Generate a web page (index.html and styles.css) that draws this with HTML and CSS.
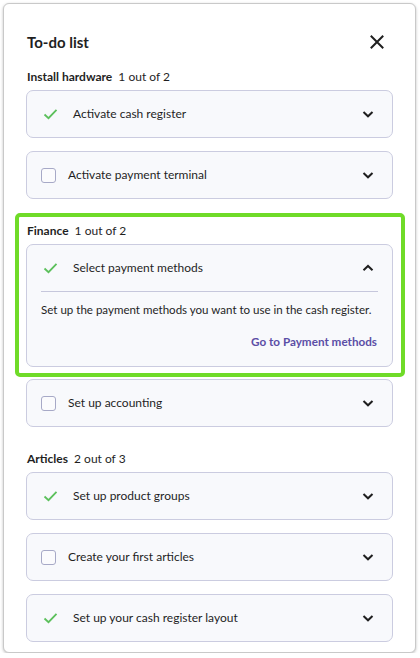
FILE: index.html
```html
<!DOCTYPE html>
<html lang="en">
<head>
<meta charset="utf-8">
<title>To-do list</title>
<link rel="stylesheet" href="styles.css">
</head>
<body>
<div class="panel">
  <div class="header">
    <h1 class="title">To-do list</h1>
    <button class="close" aria-label="Close">
      <svg width="24" height="24" viewBox="0 0 24 24"><path d="M6.5 6.5 L17.5 17.5 M17.5 6.5 L6.5 17.5" stroke="#1f1f1f" stroke-width="2" stroke-linecap="square" fill="none"/></svg>
    </button>
  </div>

  <section class="group">
    <div class="label"><b>Install hardware</b> 1 out of 2</div>
    <div class="card">
      <div class="row">
        <span class="check"><svg width="20" height="16" viewBox="0 0 20 16"><path d="M3.5 8.5 L7.5 12.2 L15.5 3.8" stroke="#5cc05c" stroke-width="1.8" fill="none"/></svg></span>
        <span class="text done">Activate cash register</span>
        <span class="chev"><svg width="16" height="16" viewBox="0 0 16 16"><path d="M3.5 6 L8 10.3 L12.5 6" stroke="#1f1f1f" stroke-width="2" fill="none"/></svg></span>
      </div>
    </div>
    <div class="card">
      <div class="row">
        <span class="box"></span>
        <span class="text">Activate payment terminal</span>
        <span class="chev"><svg width="16" height="16" viewBox="0 0 16 16"><path d="M3.5 6 L8 10.3 L12.5 6" stroke="#1f1f1f" stroke-width="2" fill="none"/></svg></span>
      </div>
    </div>
  </section>

  <section class="group highlight">
    <div class="label"><b>Finance</b> 1 out of 2</div>
    <div class="card open">
      <div class="row">
        <span class="check"><svg width="20" height="16" viewBox="0 0 20 16"><path d="M3.5 8.5 L7.5 12.2 L15.5 3.8" stroke="#5cc05c" stroke-width="1.8" fill="none"/></svg></span>
        <span class="text done">Select payment methods</span>
        <span class="chev"><svg width="16" height="16" viewBox="0 0 16 16"><path d="M3.5 10.3 L8 6 L12.5 10.3" stroke="#1f1f1f" stroke-width="2" fill="none"/></svg></span>
      </div>
      <div class="body">
        <p class="desc">Set up the payment methods you want to use in the cash register.</p>
        <div class="actions"><a class="link" href="#">Go to Payment methods</a></div>
      </div>
    </div>
  </section>
  <div class="card after-hl">
    <div class="row">
      <span class="box"></span>
      <span class="text">Set up accounting</span>
      <span class="chev"><svg width="16" height="16" viewBox="0 0 16 16"><path d="M3.5 6 L8 10.3 L12.5 6" stroke="#1f1f1f" stroke-width="2" fill="none"/></svg></span>
    </div>
  </div>

  <section class="group">
    <div class="label"><b>Articles</b> 2 out of 3</div>
    <div class="card">
      <div class="row">
        <span class="check"><svg width="20" height="16" viewBox="0 0 20 16"><path d="M3.5 8.5 L7.5 12.2 L15.5 3.8" stroke="#5cc05c" stroke-width="1.8" fill="none"/></svg></span>
        <span class="text done">Set up product groups</span>
        <span class="chev"><svg width="16" height="16" viewBox="0 0 16 16"><path d="M3.5 6 L8 10.3 L12.5 6" stroke="#1f1f1f" stroke-width="2" fill="none"/></svg></span>
      </div>
    </div>
    <div class="card">
      <div class="row">
        <span class="box"></span>
        <span class="text">Create your first articles</span>
        <span class="chev"><svg width="16" height="16" viewBox="0 0 16 16"><path d="M3.5 6 L8 10.3 L12.5 6" stroke="#1f1f1f" stroke-width="2" fill="none"/></svg></span>
      </div>
    </div>
    <div class="card">
      <div class="row">
        <span class="check"><svg width="20" height="16" viewBox="0 0 20 16"><path d="M3.5 8.5 L7.5 12.2 L15.5 3.8" stroke="#5cc05c" stroke-width="1.8" fill="none"/></svg></span>
        <span class="text done">Set up your cash register layout</span>
        <span class="chev"><svg width="16" height="16" viewBox="0 0 16 16"><path d="M3.5 6 L8 10.3 L12.5 6" stroke="#1f1f1f" stroke-width="2" fill="none"/></svg></span>
      </div>
    </div>
  </section>
</div>
</body>
</html>
```
FILE: styles.css
```css
* { box-sizing: border-box; }
html, body { margin: 0; padding: 0; background: #fff; }
body {
  font-family: Lato, "Liberation Sans", sans-serif;
  color: #1f1f1f;
  font-size: 12px;
}
.panel {
  margin: 3px 0 0 3px;
  width: 413px;
  border: 1px solid #c9c9c9;
  border-radius: 6px;
  box-shadow: 0 1px 3px rgba(0,0,0,0.25);
  padding: 26px 22px 10px 22px;
  background: #fff;
}
.header {
  display: flex;
  align-items: center;
  justify-content: space-between;
  height: 24px;
  margin-bottom: 15px;
}
.title {
  margin: 0 0 0 1px;
  font-size: 15px;
  font-weight: 700;
  line-height: 24px;
}
.close {
  border: 0;
  background: none;
  padding: 0;
  width: 24px;
  height: 24px;
  margin-right: 4px;
  display: flex;
}
.group { display: flex; flex-direction: column; gap: 13px; }
.group + .group, .after-hl + .group { margin-top: 24px; }
.label {
  line-height: 16px;
  font-size: 12px;
  margin-bottom: -8px;
  padding-left: 1px;
}
.label b { font-weight: 700; margin-right: 3px; }
.card {
  background: #f8f9fc;
  border: 1px solid #cbcce0;
  border-radius: 7px;
  padding: 0 14px;
}
.row {
  height: 46px;
  display: flex;
  align-items: center;
}
.check { width: 20px; height: 16px; display: flex; margin-right: 12px; }
.box {
  width: 15px;
  height: 15px;
  border: 1.5px solid #a7a9c7;
  border-radius: 3px;
  background: #fbfbfd;
  margin-right: 12px;
}
.text { flex: 1; line-height: 18px; }
.chev { width: 16px; height: 16px; display: flex; margin-right: 2px; }
.body {
  border-top: 1px solid #c6c7dc;
  padding: 9px 0 16px;
}
.desc { margin: 0; line-height: 18px; font-size: 11.55px; white-space: nowrap; }
.actions { display: flex; justify-content: flex-end; margin-top: 13px; }
.link {
  color: #5b4ea6;
  font-weight: 700;
  font-size: 11.7px;
  text-decoration: none;
  line-height: 18px;
  margin-right: 1px;
}
.group.highlight {
  margin: 14px -12px 0 -11px;
  border: 4px solid #6fdb28;
  border-radius: 5px;
  padding: 6px 8px 6px 7px;
}
.after-hl { margin-top: 2px; }
```
